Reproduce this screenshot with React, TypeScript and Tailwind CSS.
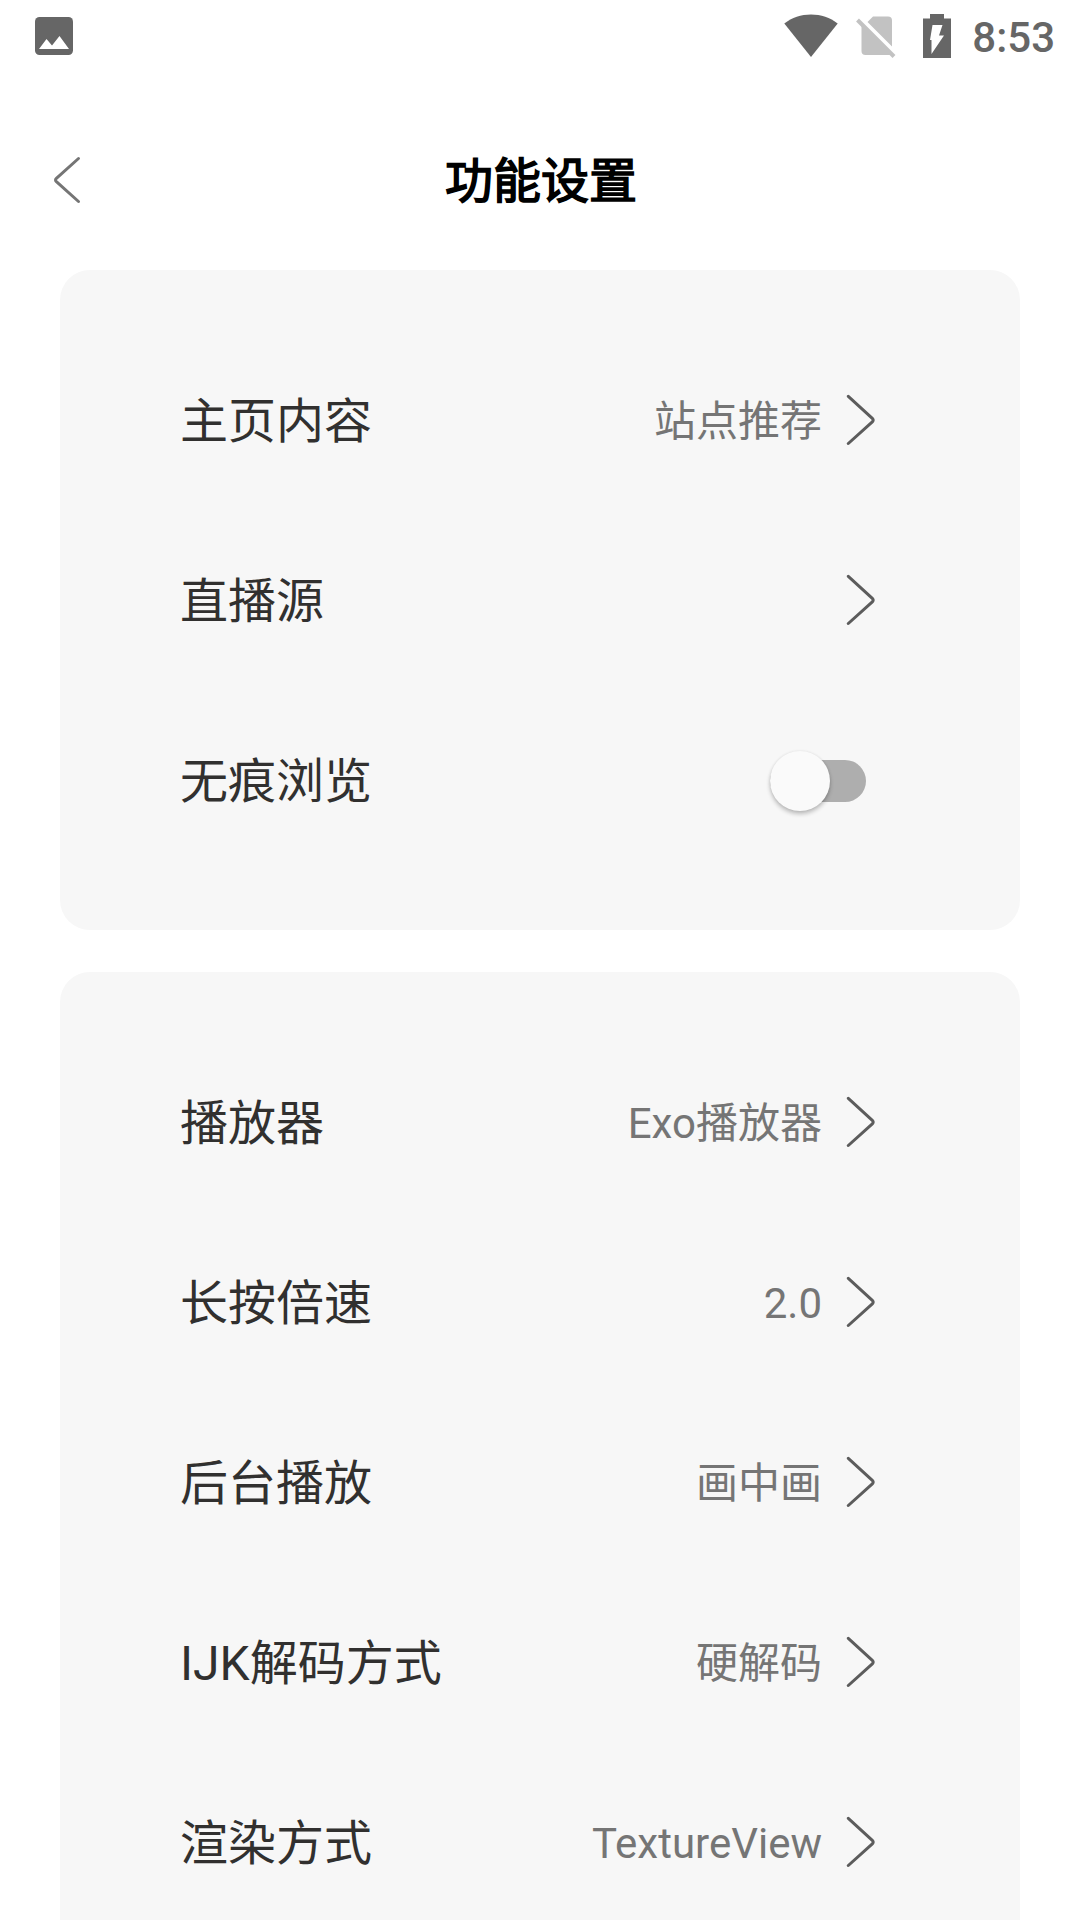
import clsx from 'clsx'

type Setting = {
  label: string
  value?: string
  type?: 'link' | 'switch'
}

const generalSettings: Setting[] = [
  { label: '主页内容', value: '站点推荐' },
  { label: '直播源' },
  { label: '无痕浏览', type: 'switch' },
]

const playerSettings: Setting[] = [
  { label: '播放器', value: 'Exo播放器' },
  { label: '长按倍速', value: '2.0' },
  { label: '后台播放', value: '画中画' },
  { label: 'IJK解码方式', value: '硬解码' },
  { label: '渲染方式', value: 'TextureView' },
]

function StatusBar() {
  return (
    <div className="flex h-18 items-center justify-between pr-[25px] pl-[35px] text-[#666666]">
      <svg width="38" height="38" viewBox="0 0 38 38">
        <rect width="38" height="38" rx="4.5" fill="currentColor" />
        <path d="M4 32 11.500 22 17 28.500 24.500 19 34 32Z" fill="#fff" />
      </svg>
      <div className="flex items-center">
        <svg width="54" height="44" viewBox="0 0 54 44" className="mr-[18px]">
          <path d="M27 43 0.300 9.500C8 3.500 17 0.500 27 0.500S46 3.500 53.700 9.500Z" fill="currentColor" />
        </svg>
        <svg width="40" height="44" viewBox="0 0 40 44" className="mr-[27px] text-[#c2c2c2]">
          <path d="M11.500 8 17 2.500H32Q36 2.500 36 6.500V32.500Z" fill="currentColor" />
          <path d="M5.500 10.500 35.500 40.500Q34.500 41 33 41H9.500Q5.500 41 5.500 37Z" fill="currentColor" />
          <path d="M1.500 6 38 42.500" stroke="currentColor" strokeWidth="4" />
        </svg>
        <svg width="28" height="44" viewBox="0 0 28 44" className="mr-[21px]">
          <path d="M0 4.500H7V0H21V4.500H28V44H0Z" fill="currentColor" />
          <path d="M9.500 11H19.500L16 21.500H21L8.500 40V26H7Z" fill="#fff" />
        </svg>
        <span className="pt-1 text-[42px] leading-none font-medium">8:53</span>
      </div>
    </div>
  )
}

function Header() {
  return (
    <div className="grid h-[216px] grid-cols-[160px_1fr_160px] items-center">
      <button className="pl-[54px]" aria-label="返回">
        <svg width="28" height="48" viewBox="0 0 28 48" fill="none">
          <path
            d="M24.500 2.500 2.400 22.300Q0.600 24 2.400 25.700L24.500 45.500"
            stroke="#757575"
            strokeWidth="3"
            strokeLinecap="round"
          />
        </svg>
      </button>
      <h1 className="pt-1 pl-[2px] text-center text-[48px] font-normal text-black [-webkit-text-stroke:1.6px_black]">
        功能设置
      </h1>
    </div>
  )
}

function Chevron() {
  return (
    <svg width="30" height="52" viewBox="0 0 30 52" fill="none" className="ml-[24px]">
      <path
        d="M2.300 2.300 26.300 24.300Q28 26.100 26.300 27.900L2.300 49.500"
        stroke="#5c5c5c"
        strokeWidth="3"
        strokeLinecap="round"
      />
    </svg>
  )
}

function Switch() {
  return (
    <div className="mt-[2px] mr-[10px] flex h-[42px] w-[96px] items-center rounded-full bg-[#aeaeae]">
      <div className="size-[60px] shrink-0 rounded-full bg-[#fafafa] shadow-[0_3px_4px_rgba(0,0,0,0.24),0_0_3px_rgba(0,0,0,0.08)]" />
    </div>
  )
}

function SettingRow({ label, value, type = 'link' }: Setting) {
  return (
    <div className="flex h-[180px] items-center">
      <span className="pt-1 text-[48px] text-[#31302f]">{label}</span>
      <div className="ml-auto flex items-center">
        {value && <span className="pt-1 text-[42px] text-[#757575]">{value}</span>}
        {type === 'switch' ? <Switch /> : <Chevron />}
      </div>
    </div>
  )
}

function SettingCard({ settings, className }: { settings: Setting[]; className?: string }) {
  return (
    <div className={clsx('mx-[60px] rounded-[30px] bg-[#f7f7f7] py-[60px] pr-[144px] pl-[120px]', className)}>
      {settings.map((setting) => (
        <SettingRow key={setting.label} {...setting} />
      ))}
    </div>
  )
}

export default function App() {
  return (
    <div className="h-[1920px] w-[1080px] overflow-hidden bg-white font-[Roboto,'Noto_Sans_CJK_SC',sans-serif] leading-none">
      <StatusBar />
      <Header />
      <SettingCard settings={generalSettings} className="-mt-[18px]" />
      <SettingCard settings={playerSettings} className="mt-[42px]" />
    </div>
  )
}
